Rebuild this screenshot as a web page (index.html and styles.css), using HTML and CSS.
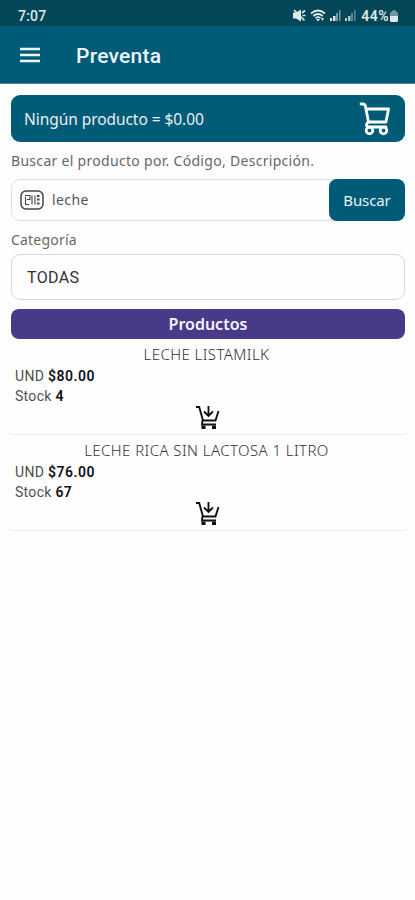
FILE: index.html
```html
<!DOCTYPE html>
<html lang="es">
<head>
<meta charset="utf-8">
<meta name="viewport" content="width=device-width, initial-scale=1">
<title>Preventa</title>
<link rel="stylesheet" href="styles.css">
</head>
<body>
<div class="status">
  <span class="time">7:07</span>
  <div class="indicators">
    <svg class="mute" width="13" height="13" viewBox="0 0 13 13"><path d="M0 3.500h3l5-3v12L3 9.500H0z" fill="currentColor"/><path d="M1 1l10.500 10.500M9 4l3-2.500M9.500 6.500h3" fill="none" stroke="currentColor" stroke-width="1.700"/></svg>
    <svg class="wifi" width="16" height="13" viewBox="0 0 16 13"><path d="M1 4.500q7-6 14 0M3.300 7q4.700-4 9.400 0M5.500 9.200q2.500-2 5 0" fill="none" stroke="currentColor" stroke-width="1.700"/><path d="M6 10l2 2.500 2-2.500zM11 9h3l-1.500 3z" fill="currentColor"/></svg>
    <svg class="signal" width="11" height="11" viewBox="0 0 11 11"><path d="M0 11V8h2v3zM3 11V6h2.500v5z" fill="currentColor"/><path d="M6 11V3h2v8zM9 11V0h1.500v11z" fill="currentColor" opacity=".5"/></svg>
    <svg class="signal" width="11" height="11" viewBox="0 0 11 11"><path d="M0 11V8h2v3zM3 11V6h2.500v5z" fill="currentColor" opacity=".8"/><path d="M6 11V3h2v8zM9 11V0h1.500v11z" fill="currentColor" opacity=".4"/></svg>
    <span class="percent">44%</span>
    <svg class="battery" width="8" height="12" viewBox="0 0 8 12"><path d="M2 1.500Q2 0 4 0t2 1.500Q8 2 8 3.500V6H0V3.500Q0 2 2 1.500z" fill="currentColor" opacity=".5"/><path d="M0 6h8v4.500Q8 12 6.500 12h-5Q0 12 0 10.500z" fill="currentColor"/></svg>
  </div>
</div>
<header class="appbar">
  <svg width="20" height="16" viewBox="0 0 20 16"><path d="M0 2h20M0 8h20M0 14h20" stroke="currentColor" stroke-width="2.600"/></svg>
  <h1>Preventa</h1>
</header>
<main>
  <section class="summary">
    <span>Ningún producto = $0.00</span>
    <svg width="32" height="34" viewBox="0 0 32 34" fill="none" stroke="currentColor" stroke-width="2.800" stroke-linecap="round" stroke-linejoin="round"><path d="M2 2h2q2 0 2.500 2.500L9.500 20M7 7h22.500L27 20H9.500Q6 22.500 8.500 25H27"/><circle cx="10.500" cy="28.500" r="3.300"/><circle cx="24.500" cy="28.500" r="3.300"/></svg>
  </section>
  <label class="caption hint">Buscar el producto por. Código, Descripción.</label>
  <div class="search">
    <svg width="24" height="20" viewBox="0 0 24 20" fill="none" stroke="currentColor"><rect x="1" y="1" width="22" height="18" rx="5" stroke-width="1.500"/><path d="M5 5.500h5v4H7M5.500 7v7.500H9M12 5.500v9M15 5.500v9" stroke-width="1.100"/><path d="M17 6h2.500M17 9.500h2.500M17 13.500h2.500" stroke-width="2"/></svg>
    <span class="query">leche</span>
    <button>Buscar</button>
  </div>
  <label class="caption category">Categoría</label>
  <div class="select">TODAS</div>
  <h2>Productos</h2>
  <article>
    <h3>LECHE LISTAMILK</h3>
    <p>UND <b class="price">$80.00</b></p>
    <p>Stock <b>4</b></p>
    <svg class="add" width="24" height="25" viewBox="0 0 24 25" fill="none" stroke="currentColor" stroke-width="1.900"><path d="M0 2h3.200L7 15.500h12.500L22.500 6M6.500 15l-.5 4.500h14M12.500 1v9M8 6.500l4.500 4.500L17 6.500"/><path d="M5.500 20.500h4V24h-4zM16 20.500h4V24h-4z" fill="currentColor" stroke="none"/></svg>
  </article>
  <article>
    <h3>LECHE RICA SIN LACTOSA 1 LITRO</h3>
    <p>UND <b class="price">$76.00</b></p>
    <p>Stock <b>67</b></p>
    <svg class="add" width="24" height="25" viewBox="0 0 24 25" fill="none" stroke="currentColor" stroke-width="1.900"><path d="M0 2h3.200L7 15.500h12.500L22.500 6M6.500 15l-.5 4.500h14M12.500 1v9M8 6.500l4.500 4.500L17 6.500"/><path d="M5.500 20.500h4V24h-4zM16 20.500h4V24h-4z" fill="currentColor" stroke="none"/></svg>
  </article>
</main>
</body>
</html>
```
FILE: styles.css
```css
* { box-sizing: border-box; }
body { margin: 0; min-height: 900px; background: #fefefe; color: #333; font-family: "Noto Sans", sans-serif; }
svg { display: block; flex: none; }
h1, h2, h3, p { margin: 0; }
.status { height: 26px; padding: 5px 17px 0 18px; background: #024657; color: #dfe9ec; display: flex; justify-content: space-between; font-family: Roboto, sans-serif; }
.time { font-size: 14px; line-height: 22px; font-weight: 500; letter-spacing: .2px; }
.indicators { display: flex; align-items: center; height: 21px; }
.wifi { margin-left: 4px; }
.signal { margin-left: 4px; }
.signal + .signal { margin-left: 4px; }
.percent { margin-left: 5px; font-size: 14px; font-weight: 600; letter-spacing: .5px; }
.battery { margin-left: 1px; }
.appbar { height: 58px; padding: 0 20px 0; background: #005b76; border-bottom: 1px solid #4d8799; color: #edf4f6; display: flex; align-items: center; gap: 36px; }
.appbar h1 { font: 500 21px/30px Roboto, sans-serif; padding-top: 3px; letter-spacing: .25px; }
main { padding: 11px 10px 0 11px; }
.summary { height: 47px; padding: 0 14px 0 13px; border-radius: 9px; background: #005b76; color: #e6f0f4; display: flex; align-items: center; justify-content: space-between; font-size: 15.500px; letter-spacing: -.06px; }
.summary svg { color: #fff; }
.caption { display: block; margin-top: 9px; height: 20px; line-height: 20px; font-size: 14px; color: #686868; white-space: nowrap; letter-spacing: .2px; }
.hint { letter-spacing: .3px; }
.search { margin-top: 8px; height: 42px; border: 1px solid #dedede; border-radius: 9px; display: flex; align-items: center; padding-left: 8px; }
.search svg { color: #444; }
.query { flex: 1; padding-left: 8px; padding-bottom: 1px; font-size: 14px; letter-spacing: .4px; color: #555; }
.search button { width: 76px; height: 42px; margin-right: -1px; padding: 0; border: 0; border-radius: 8px; background: #005b76; color: #e8f3f7; font: 15px "Noto Sans", sans-serif; letter-spacing: -.1px; }
.category { margin-top: 9px; }
.select { margin-top: 4px; height: 46px; padding-left: 15px; border: 1px solid #d8d8d8; border-radius: 9px; font-size: 16px; line-height: 45px; letter-spacing: .35px; font-family: Roboto, sans-serif; }
h2 { margin-top: 9px; height: 30px; border-radius: 8px; background: #483a89; color: #f5f3fc; text-align: center; font-size: 16px; line-height: 30px; font-weight: 600; }
article { height: 96px; padding: 6px 4px 0; border-bottom: 1px solid #eee; font: 14px/20px Roboto, sans-serif; color: #505050; letter-spacing: .3px; }
article h3 { height: 21px; margin: -1px -1px 1px -4px; font: 300 15px/20px "Noto Sans", sans-serif; letter-spacing: .43px; text-align: center; color: #333; }
article b { color: #111; font-weight: 600; }
.price { letter-spacing: .5px; }
article .add { margin: -1px auto 0; color: #111; }
```
